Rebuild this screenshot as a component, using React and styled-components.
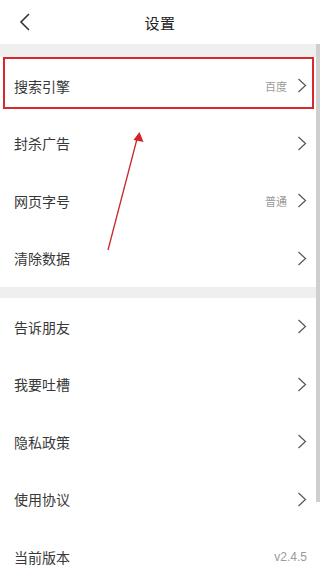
import React from "react";
import styled, { createGlobalStyle } from "styled-components";

const Global = createGlobalStyle`
  html, body { margin: 0; padding: 0; background: #fff; }
  body { font-family: "Noto Sans CJK SC", "Noto Sans", sans-serif; }
  * { box-sizing: border-box; }
`;

const Screen = styled.div`
  position: relative;
  width: 320px;
  height: 569px;
  overflow: hidden;
  background: #fff;
`;

const Header = styled.header`
  position: relative;
  height: 44px;
  display: flex;
  align-items: center;
  justify-content: center;
  background: #fff;
`;

const BackButton = styled.button`
  position: absolute;
  left: 14px;
  top: 10px;
  width: 22px;
  height: 24px;
  border: 0;
  padding: 0;
  background: none;
  display: flex;
  align-items: center;
  justify-content: center;
`;

const Title = styled.h1`
  margin: 0;
  font-size: 15px;
  font-weight: 400;
  color: #222;
  letter-spacing: 0.5px;
`;

const Gap = styled.div`
  height: ${(p) => p.$h}px;
  background: #efefef;
`;

const List = styled.ul`
  margin: 0;
  padding: 0;
  list-style: none;
`;

const Row = styled.li`
  height: 57.5px;
  display: flex;
  align-items: center;
  padding: 0 13px 0 14px;
`;

const Label = styled.span`
  flex: 1;
  font-size: 14px;
  color: #383838;
`;

const Value = styled.span`
  font-size: ${(p) => (p.$latin ? 12 : 11)}px;
  color: #9a9a9a;
  margin-right: ${(p) => (p.$last ? 0 : 10)}px;
  font-family: ${(p) => (p.$latin ? '"Liberation Sans", Arial, sans-serif' : "inherit")};
`;

const Chevron = () => (
  <svg width="10" height="15" viewBox="0 0 10 15">
    <path d="M1.5 1 L8.5 7.5 L1.5 14" fill="none" stroke="#555" strokeWidth="1.2" />
  </svg>
);

const Highlight = styled.div`
  position: absolute;
  left: 3px;
  top: 57px;
  width: 311px;
  height: 52px;
  border: 2px solid #d8282c;
  pointer-events: none;
`;

const Annotation = styled.svg`
  position: absolute;
  left: 0;
  top: 0;
  pointer-events: none;
`;

const ScrollThumb = styled.div`
  position: absolute;
  right: 0;
  top: 44px;
  width: 4px;
  height: 458px;
  background: #cfcfcf;
`;

const section1 = [
  { label: "搜索引擎", value: "百度" },
  { label: "封杀广告" },
  { label: "网页字号", value: "普通" },
  { label: "清除数据" },
];

const section2 = [
  { label: "告诉朋友" },
  { label: "我要吐槽" },
  { label: "隐私政策" },
  { label: "使用协议" },
  { label: "当前版本", value: "v2.4.5", noArrow: true },
];

const renderRows = (rows) =>
  rows.map((r) => (
    <Row key={r.label}>
      <Label>{r.label}</Label>
      {r.value && (
        <Value $last={r.noArrow} $latin={r.noArrow}>
          {r.value}
        </Value>
      )}
      {!r.noArrow && <Chevron />}
    </Row>
  ));

export default function App() {
  return (
    <Screen>
      <Global />
      <Header>
        <BackButton aria-label="back">
          <svg width="12" height="18" viewBox="0 0 12 18">
            <path d="M10 1 L2 9 L10 17" fill="none" stroke="#333" strokeWidth="1.6" />
          </svg>
        </BackButton>
        <Title>设置</Title>
      </Header>
      <Gap $h={13} />
      <List>{renderRows(section1)}</List>
      <Gap $h={11} />
      <List>{renderRows(section2)}</List>

      <Highlight />
      <Annotation width="320" height="569" viewBox="0 0 320 569">
        <line x1="108" y1="250" x2="137" y2="139" stroke="#c8262b" strokeWidth="1.3" />
        <polygon points="139.5,132 143.5,142 133.5,140" fill="#d8202a" />
      </Annotation>
      <ScrollThumb />
    </Screen>
  );
}
